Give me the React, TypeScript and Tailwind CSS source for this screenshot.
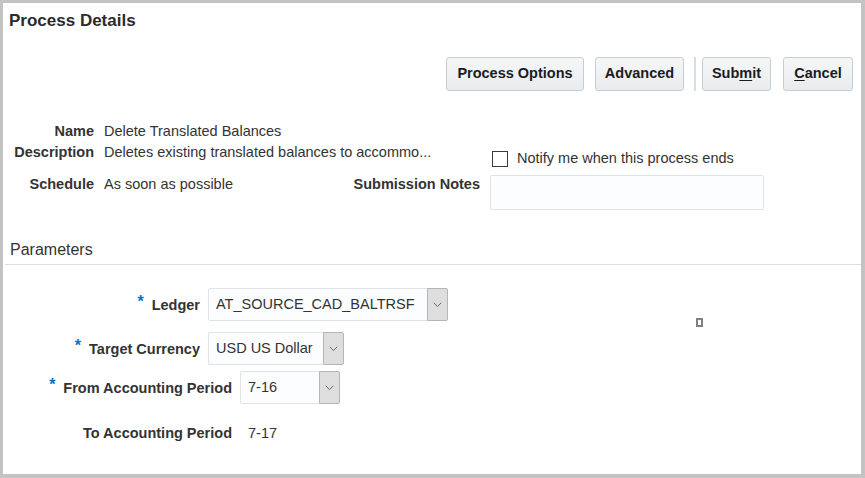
import React from "react";

const font = { fontFamily: '"Liberation Sans", Arial, sans-serif' };

function Btn({ w, children }: { w: string; children: React.ReactNode }) {
  return (
    <div
      className={`${w} h-[34px] flex items-center justify-center rounded-[3px] border border-[#c4ced7] bg-gradient-to-b from-[#f5f6f7] to-[#e9ecef] text-[14.5px] font-bold text-[#1c1c1c]`}
    >
      {children}
    </div>
  );
}

function Chevron() {
  return (
    <svg width="9" height="6" viewBox="0 0 9 6">
      <polyline points="0.8,0.8 4.5,4.6 8.2,0.8" fill="none" stroke="#6b6b6b" strokeWidth="1" />
    </svg>
  );
}

function Select({ w, value }: { w: string; value: string }) {
  return (
    <div className={`${w} h-[33px] flex items-stretch rounded-[2px] border border-[#dfe4e8] bg-[#fcfdfe]`}>
      <div className="flex-1 flex items-center pl-[7px] text-[14.5px] text-[#333] whitespace-nowrap overflow-hidden">{value}</div>
      <div className="w-[21px] -my-px -mr-px flex items-center justify-center border border-[#b5b5b5] bg-[#dedede] rounded-r-[2px]">
        <Chevron />
      </div>
    </div>
  );
}

function Req({ children }: { children: React.ReactNode }) {
  return (
    <span className="whitespace-nowrap">
      <span className="relative -top-[3px] mr-[8px] text-[16px] font-bold text-[#0572ce]">*</span>
      {children}
    </span>
  );
}

export default function App() {
  return (
    <div style={font} className="w-[865px] h-[478px] bg-[#c3c3c3] pl-[3px] pt-[3px] pr-[4px] pb-[4px]">
      <div className="w-full h-full bg-white flex flex-col text-[#333]">
        <h1 className="mt-[8px] pl-[6px] text-[17px] leading-[20px] font-bold text-[#2b2b2b]">Process Details</h1>

        <div className="mt-[26px] flex items-center justify-end pr-[8px]">
          <Btn w="w-[138px]">Process Options</Btn>
          <div className="ml-[11px]">
            <Btn w="w-[89px]">Advanced</Btn>
          </div>
          <div className="ml-[10px] w-[2px] h-[34px] bg-[#d6dfe6]" />
          <div className="ml-[6px]">
            <Btn w="w-[69px]">
              <span>
                Sub<span className="underline underline-offset-2">m</span>it
              </span>
            </Btn>
          </div>
          <div className="ml-[12px]">
            <Btn w="w-[70px]">
              <span>
                <span className="underline underline-offset-2">C</span>ancel
              </span>
            </Btn>
          </div>
        </div>

        <div className="flex">
          <div className="w-[337px] shrink-0 mt-[31px] flex flex-col text-[14.5px]">
            <div className="flex h-[20px] items-center">
              <div className="w-[91px] shrink-0 text-right font-bold">Name</div>
              <div className="ml-[10px] whitespace-nowrap">Delete Translated Balances</div>
            </div>
            <div className="flex h-[20px] items-center mt-[1px]">
              <div className="w-[91px] shrink-0 flex justify-end font-bold whitespace-nowrap">Description</div>
              <div className="ml-[10px] whitespace-nowrap">Deletes existing translated balances to accommo...</div>
            </div>
            <div className="flex h-[20px] items-center mt-[12px]">
              <div className="w-[91px] shrink-0 text-right font-bold">Schedule</div>
              <div className="ml-[10px] whitespace-nowrap">As soon as possible</div>
            </div>
          </div>

          <div className="mt-[60px] flex flex-col text-[14.5px]">
            <div className="flex h-[16px] items-center">
              <div className="w-[140px] shrink-0" />
              <div className="ml-[12px] w-[16px] h-[16px] border border-[#3a3a3a] bg-white" />
              <div className="ml-[9px] whitespace-nowrap">Notify me when this process ends</div>
            </div>
            <div className="flex mt-[8px] items-start">
              <div className="w-[140px] shrink-0 text-right font-bold leading-[18px] whitespace-nowrap">Submission Notes</div>
              <div className="ml-[10px] w-[274px] h-[35px] rounded-[2px] border border-[#dfe4e8] bg-[#fcfdfe]" />
            </div>
          </div>
        </div>

        <div className="mt-[30px] ml-[2px] border-b border-[#d6dfe6] pb-[4px]">
          <div className="pl-[5px] text-[16px] leading-[20px] text-[#333]">Parameters</div>
        </div>

        <div className="flex flex-col text-[14.5px]">
          <div className="mt-[23px] flex h-[33px] items-center">
            <div className="w-[197px] shrink-0 text-right font-bold">
              <Req>Ledger</Req>
            </div>
            <div className="ml-[8px]">
              <Select w="w-[240px]" value="AT_SOURCE_CAD_BALTRSF" />
            </div>
            <div className="self-start mt-[30px] ml-[248px] w-[7px] h-[9px] border-2 border-[#808080] bg-white" />
          </div>
          <div className="mt-[11px] flex h-[33px] items-center">
            <div className="w-[197px] shrink-0 text-right font-bold">
              <Req>Target Currency</Req>
            </div>
            <div className="ml-[8px]">
              <Select w="w-[136px]" value="USD US Dollar" />
            </div>
          </div>
          <div className="mt-[6px] flex h-[33px] items-center">
            <div className="w-[229px] shrink-0 text-right font-bold">
              <Req>From Accounting Period</Req>
            </div>
            <div className="ml-[8px]">
              <Select w="w-[100px]" value="7-16" />
            </div>
          </div>
          <div className="mt-[20px] flex h-[20px] items-center">
            <div className="w-[229px] shrink-0 text-right font-bold">To Accounting Period</div>
            <div className="ml-[16px]">7-17</div>
          </div>
        </div>
      </div>
    </div>
  );
}
